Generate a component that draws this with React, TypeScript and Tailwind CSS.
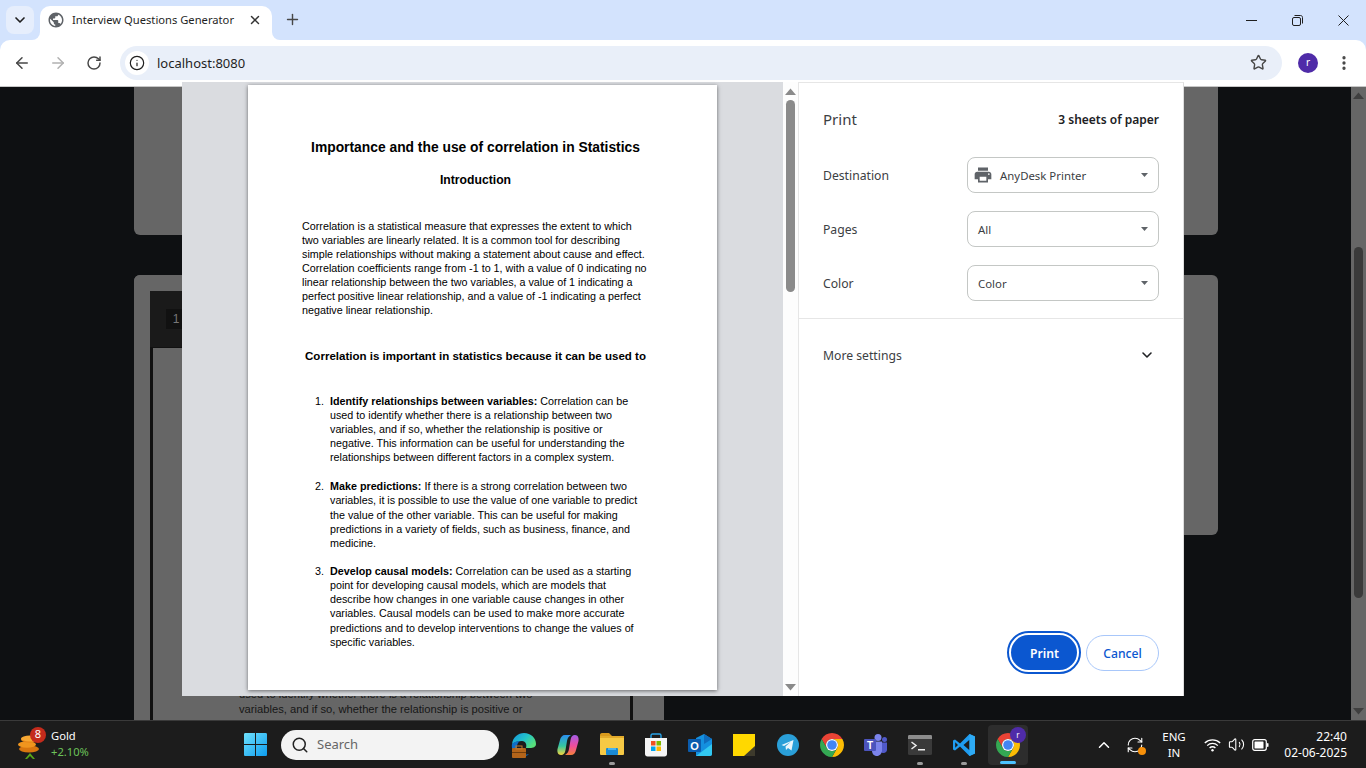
import { ArrowLeft, ArrowRight, ChevronDown, ChevronUp, EllipsisVertical, Info, Plus, RefreshCw, RotateCw, Search, Star, Volume2, X } from 'lucide-react';

const ui = { fontFamily: '"Noto Sans", "Open Sans", sans-serif' };

function Caret() {
  return (
    <svg width="7" height="4" viewBox="0 0 7 4" className="shrink-0">
      <path d="M0 0h7L3.500 4z" fill="#5f6368" />
    </svg>
  );
}

function Globe() {
  return (
    <svg width="18" height="18" viewBox="0 0 24 24" fill="#5f6368">
      <path d="M12 2C6.48 2 2 6.48 2 12s4.48 10 10 10 10-4.48 10-10S17.52 2 12 2zm-1 17.93c-3.95-.49-7-3.85-7-7.93 0-.62.08-1.21.21-1.79L9 15v1c0 1.1.9 2 2 2v1.93zm6.9-2.54c-.26-.81-1-1.39-1.9-1.39h-1v-3c0-.55-.45-1-1-1H8v-2h2c.55 0 1-.45 1-1V7h2c1.1 0 2-.9 2-2v-.41c2.93 1.19 5 4.06 5 7.41 0 2.08-.8 3.97-2.1 5.39z" />
    </svg>
  );
}

function ChromeLogo({ size = 24 }: { size?: number }) {
  return (
    <svg width={size} height={size} viewBox="2 2 20 20">
      <path d="M3.34 7A10 10 0 0 1 20.66 7H12A5 5 0 0 0 7.67 14.5Z" fill="#ea4335" />
      <path d="M20.66 7A10 10 0 0 1 12 22L16.33 14.5A5 5 0 0 0 12 7Z" fill="#fbbc04" />
      <path d="M12 22A10 10 0 0 1 3.34 7L7.67 14.5A5 5 0 0 0 16.33 14.5Z" fill="#34a853" />
      <circle cx="12" cy="12" r="5" fill="#fff" />
      <circle cx="12" cy="12" r="4" fill="#4285f4" />
    </svg>
  );
}

function EdgeLogo() {
  return (
    <svg width="26" height="26" viewBox="0 0 26 26">
      <defs>
        <linearGradient id="edgeTop" x1="0" y1="0" x2="1" y2="0.600">
          <stop offset="0" stopColor="#1593e0" />
          <stop offset="0.550" stopColor="#22c3c9" />
          <stop offset="1" stopColor="#58e07a" />
        </linearGradient>
      </defs>
      <path d="M1 12C2 5 7 1 13 1c7 0 12 5 12 11 0 3-3 4-6 4h-4c1-3 0-7-4-7-4 0-7 1-10 3z" fill="url(#edgeTop)" />
      <path d="M1 12c2-2 5-3 8-3-3 2-4 6-2 10 2 3 7 5 11 3-3 3-7 3-10 2-5-2-8-7-7-12z" fill="#0f6fc9" />
      <rect x="1" y="16" width="14" height="10" rx="1" fill="#b3641a" />
      <rect x="5" y="14" width="6" height="3" fill="none" stroke="#c47a2c" strokeWidth="1" />
      <rect x="1" y="20" width="14" height="1" fill="#6f3d0d" />
    </svg>
  );
}

function CopilotLogo() {
  return (
    <svg width="24" height="24" viewBox="0 0 24 24">
      <defs>
        <linearGradient id="copA" x1="0" y1="0" x2="0" y2="1">
          <stop offset="0" stopColor="#2b8ff0" />
          <stop offset="0.55" stopColor="#35c6a0" />
          <stop offset="1" stopColor="#f5d63d" />
        </linearGradient>
        <linearGradient id="copB" x1="0" y1="0" x2="0" y2="1">
          <stop offset="0" stopColor="#a45ce8" />
          <stop offset="0.55" stopColor="#ee4d9b" />
          <stop offset="1" stopColor="#f5813c" />
        </linearGradient>
      </defs>
      <path d="M9 2h6c-2.500 1.500-3.500 3-4 6l-1.500 9C9 20.500 7.500 22 5 22c-3 0-4-3-3.500-6L4 7c.5-3 2.500-5 5-5z" fill="url(#copA)" />
      <path d="M15 22H9c2.500-1.500 3.500-3 4-6l1.500-9C15 3.500 16.500 2 19 2c3 0 4 3 3.500 6L20 17c-.5 3-2.500 5-5 5z" fill="url(#copB)" />
    </svg>
  );
}

function FolderLogo() {
  return (
    <svg width="26" height="24" viewBox="0 0 26 24">
      <path d="M1 2c0-1 .5-2 2-2h7l3 3h-12z" fill="#d99a1c" />
      <rect x="1" y="3" width="24" height="19" rx="1" fill="#f6c945" />
      <rect x="1" y="3" width="24" height="2" fill="#e3ab2b" />
      <rect x="7" y="15" width="12" height="7" rx="1" fill="#1a8ad4" />
      <rect x="9" y="15" width="8" height="2" fill="#49b3ec" />
    </svg>
  );
}

function StoreLogo() {
  return (
    <svg width="24" height="24" viewBox="0 0 24 24">
      <path d="M7 5V2.500C7 1.500 7.500 1 8.500 1h7c1 0 1.500.5 1.500 1.500V5" fill="none" stroke="#27a3e8" strokeWidth="1.400" />
      <path d="M1 5h22v16c0 1.500-1 2.500-2.500 2.500h-17C2 23.500 1 22.500 1 21z" fill="#f5f5f5" />
      <rect x="7" y="8" width="4.500" height="4.500" fill="#f25022" />
      <rect x="12.500" y="8" width="4.500" height="4.500" fill="#7fba00" />
      <rect x="7" y="13.500" width="4.500" height="4.500" fill="#00a4ef" />
      <rect x="12.500" y="13.500" width="4.500" height="4.500" fill="#ffb900" />
    </svg>
  );
}

function OutlookLogo() {
  return (
    <svg width="24" height="24" viewBox="0 0 24 24">
      <path d="M8 5l8-4 8 5v15c0 1-1 2-2 2H8z" fill="#1490df" />
      <path d="M16 1l8 5-8 5z" fill="#0f6cbd" />
      <path d="M8 23l16-12v10c0 1-1 2-2 2z" fill="#32c8f0" />
      <rect x="0" y="6" width="13" height="13" rx="1" fill="#0b5cad" />
      <text x="6.500" y="16.500" textAnchor="middle" fontSize="11" fontWeight="700" fill="#fff" fontFamily="Liberation Sans, sans-serif">O</text>
    </svg>
  );
}

function StickyLogo() {
  return (
    <svg width="22" height="22" viewBox="0 0 22 22">
      <path d="M0 0h22v13l-9 9H0z" fill="#ffd800" />
      <path d="M22 12v10H11z" fill="#3d3a2c" />
    </svg>
  );
}

function TelegramLogo() {
  return (
    <svg width="22" height="22" viewBox="0 0 22 22">
      <circle cx="11" cy="11" r="11" fill="#2a9fd8" />
      <path d="M4.500 11l12-5-2 10.500-3.500-2.500-2 2-.5-3.500 5-4.500-6.500 4z" fill="#eaf6fc" />
    </svg>
  );
}

function TeamsLogo() {
  return (
    <svg width="24" height="24" viewBox="0 0 24 24">
      <circle cx="14" cy="4.500" r="3.500" fill="#7b83eb" />
      <circle cx="20.500" cy="6.500" r="2.500" fill="#5059c9" />
      <path d="M17 9.500h6v7c0 2-1.500 3.500-3.500 3.500-1 0-2-.5-2.500-1z" fill="#5059c9" />
      <path d="M8 8.500h10v9c0 3-2.500 5.500-5 5.500s-5-2-5-5z" fill="#7b83eb" />
      <rect x="0" y="6" width="12" height="12" rx="1" fill="#4b53bc" />
      <text x="6" y="15.500" textAnchor="middle" fontSize="10" fontWeight="700" fill="#fff" fontFamily="Liberation Sans, sans-serif">T</text>
    </svg>
  );
}

function TerminalLogo() {
  return (
    <svg width="24" height="20" viewBox="0 0 24 20">
      <rect width="24" height="20" rx="1.500" fill="#3a3a3a" />
      <path d="M0 1.500C0 .5.5 0 1.500 0h21c1 0 1.500.5 1.500 1.500V4H0z" fill="#8c8c8c" />
      <path d="M3.500 7l4.500 3.500L3.500 14" fill="none" stroke="#eee" strokeWidth="1.500" />
      <rect x="10" y="14" width="7" height="1.500" fill="#eee" />
    </svg>
  );
}

function VsCodeLogo() {
  return (
    <svg width="24" height="24" viewBox="0 0 24 24">
      <path fillRule="evenodd" d="M17.500 1 23 3.500v17L17.500 23 8 13.500 3 17.500 1 16.500v-9l2-1 5 4zM17.500 6.800 11.500 12l6 5.200zM3.200 9.300v5.400L6 12z" fill="#1f9cf0" />
      <path d="M17.500 1 23 3.500v17L17.500 23z" fill="#2eabf5" />
    </svg>
  );
}

function WindowsLogo() {
  return (
    <svg width="23" height="23" viewBox="0 0 23 23">
      <defs>
        <linearGradient id="winG" x1="0" y1="0" x2="1" y2="1">
          <stop offset="0" stopColor="#6fe0fb" />
          <stop offset="1" stopColor="#0d9df0" />
        </linearGradient>
      </defs>
      <path d="M0 1.500C0 .5.500 0 1.500 0H11v11H0zM12 0h9.500c1 0 1.500.5 1.500 1.500V11H12zM0 12h11v11H1.500C.5 23 0 22.500 0 21.500zM12 12h11v9.500c0 1-.5 1.500-1.500 1.500H12z" fill="url(#winG)" />
    </svg>
  );
}

function CoinsLogo() {
  return (
    <svg width="24" height="22" viewBox="0 0 24 22">
      <ellipse cx="12" cy="17" rx="10" ry="3.500" fill="#d9760f" />
      <ellipse cx="10" cy="12.500" rx="9" ry="3.200" fill="#f0951e" />
      <ellipse cx="13" cy="7.500" rx="9" ry="3.200" fill="#e9881a" />
      <ellipse cx="13" cy="6.500" rx="9" ry="3" fill="#f7a833" />
    </svg>
  );
}

function TaskIcon({ children, dot, active }: { children: React.ReactNode; dot?: boolean; active?: boolean }) {
  return (
    <div className={`relative flex h-10 w-10 items-center justify-center rounded-[4px] ${active ? 'bg-[#2d2d2d]' : 'mr-1'}`}>
      {children}
      {dot && <span className="absolute bottom-0 left-[17px] h-[3px] w-[6px] rounded-full bg-[#9b9b9b]" />}
      {active && <span className="absolute bottom-[1px] left-[12px] h-[3px] w-4 rounded-full bg-[#4cc2ff]" />}
    </div>
  );
}

function Row({ label, value, icon }: { label: string; value: string; icon?: boolean }) {
  return (
    <div className="flex h-9 items-center justify-between">
      <span className="pt-[2px] text-[12.200px] text-[#3c4043]">{label}</span>
      <div className={`flex h-9 w-[192px] items-center rounded-lg border border-[#c4c7c5] pr-[10px] ${icon ? 'pl-[5px]' : 'pl-[10px]'}`}>
        {icon && (
          <svg width="20" height="20" viewBox="0 0 24 24" fill="#5f6368" className="mr-[7px]">
            <path d="M19 8H5c-1.660 0-3 1.340-3 3v6h4v4h12v-4h4v-6c0-1.660-1.340-3-3-3zm-3 11H8v-5h8v5zm3-7c-.55 0-1-.45-1-1s.45-1 1-1 1 .45 1 1-.45 1-1 1zm-1-9H6v4h12V3z" />
          </svg>
        )}
        <span className="flex-1 pt-[2px] text-[11.400px] text-[#3c4043]">{value}</span>
        <Caret />
      </div>
    </div>
  );
}

function ListItem({ n, title, lines, className }: { n: number; title: string; lines: string[]; className?: string }) {
  return (
    <div className={`flex ${className ?? ''}`}>
      <span className="w-[28px] shrink-0 pr-[6px] text-right">{n}.</span>
      <p className="whitespace-nowrap">
        <b>{title}</b> {lines[0]}
        {lines.slice(1).map((l) => (
          <span key={l}>
            <br />
            {l}
          </span>
        ))}
      </p>
    </div>
  );
}

function ScrollArrow({ up, color }: { up?: boolean; color: string }) {
  return (
    <svg width="11" height="7" viewBox="0 0 11 7">
      <path d={up ? 'M5.500 0.500 11 7H0z' : 'M0 0h11L5.500 6.500z'} fill={color} />
    </svg>
  );
}

export default function App() {
  return (
    <div className="relative flex h-[768px] w-[1366px] flex-col overflow-hidden bg-[#d3e3fd]" style={ui}>
      {/* tab strip */}
      <div className="flex h-10 shrink-0 items-end pl-[6px]">
        <div className="mb-[6px] flex h-7 w-7 items-center justify-center rounded-lg bg-[#e6eefc]">
          <ChevronDown size={16} strokeWidth={2.5} className="text-[#1f1f1f]" />
        </div>
        <div className="relative ml-[6px] flex h-[34px] w-[232px] items-center rounded-t-[10px] bg-white pb-[6px] pl-[7px] pr-[10px]">
          <span className="absolute bottom-0 left-[-8px] h-2 w-2 bg-white">
            <span className="block h-full w-full rounded-br-lg bg-[#d3e3fd]" />
          </span>
          <span className="absolute bottom-0 right-[-8px] h-2 w-2 bg-white">
            <span className="block h-full w-full rounded-bl-lg bg-[#d3e3fd]" />
          </span>
          <span className="mr-[7px]">
            <Globe />
          </span>
          <span className="flex-1 whitespace-nowrap text-[11.200px] text-[#1f1f1f]">Interview Questions Generator</span>
          <X size={14} strokeWidth={2.5} className="text-[#333]" />
        </div>
        <div className="mb-[7px] ml-[6px] flex h-7 w-7 items-center justify-center">
          <Plus size={17} strokeWidth={2} className="text-[#474747]" />
        </div>
        <div className="mb-[6px] ml-auto flex h-7 items-center">
          <div className="flex w-[46px] justify-center">
            <svg width="11" height="11" viewBox="0 0 11 11">
              <path d="M0 5.500h11" stroke="#1f1f1f" />
            </svg>
          </div>
          <div className="flex w-[46px] justify-center">
            <svg width="11" height="11" viewBox="0 0 11 11" fill="none" stroke="#1f1f1f">
              <rect x="0.500" y="2.500" width="8" height="8" rx="1.500" />
              <path d="M2.500 .5h6c1.200 0 2 .8 2 2v6" />
            </svg>
          </div>
          <div className="flex w-[46px] justify-center">
            <svg width="11" height="11" viewBox="0 0 11 11">
              <path d="M.5.5l10 10M10.500.5l-10 10" stroke="#1f1f1f" />
            </svg>
          </div>
        </div>
      </div>

      {/* toolbar */}
      <div className="flex h-[47px] shrink-0 items-center rounded-t-[10px] border-b border-[#c7c7c7] bg-white pb-[1px] pl-[13px] pr-[13px]">
        <ArrowLeft size={18} strokeWidth={2} className="text-[#474747]" />
        <ArrowRight size={18} strokeWidth={2} className="ml-[18px] text-[#b1b1b1]" />
        <RotateCw size={16} strokeWidth={2.2} className="ml-[19px] text-[#474747]" />
        <div className="ml-[18px] flex h-[34px] w-[1162px] items-center rounded-full bg-[#e9eff9] pl-[5px] pr-[15px]">
          <div className="flex h-6 w-6 items-center justify-center rounded-full bg-white">
            <Info size={16} strokeWidth={1.8} className="text-[#1f1f1f]" />
          </div>
          <span className="ml-[8px] flex-1 pt-[2px] text-[13px] text-[#1f1f1f]">localhost:8080</span>
          <Star size={17} strokeWidth={2} className="text-[#474747]" />
        </div>
        <div className="ml-[16px] flex h-5 w-5 items-center justify-center rounded-full bg-[#4f2ba8] text-[10px] text-white">r</div>
        <EllipsisVertical size={18} strokeWidth={2.4} className="ml-[17px] text-[#474747]" />
      </div>

      {/* dimmed page */}
      <div className="flex h-[633px] shrink-0 bg-[#0e1012]">
        <div className="flex-1 pl-[134px]" style={{ fontFamily: '"Liberation Sans", sans-serif' }}>
          <div className="h-[148px] w-[1084px] rounded-b-md bg-[#666]" />
          <div className="mt-10 h-[260px] w-[1084px] rounded-md bg-[#666]">
            <div className="h-[445px] w-[530px] rounded-tl-md bg-[#666] pl-4 pt-4">
              <div className="h-[429px] w-[483px] border-x-[3px] border-x-[#111] bg-[#666]">
                <div className="-mx-[3px] h-[57px] border-b border-b-[#111] bg-[#1a1a1a] pl-4 pt-[18px]">
                  <span className="flex h-5 w-5 items-center justify-center bg-[#111] text-[12px] text-[#777]">1</span>
                </div>
                <p className="whitespace-nowrap pl-[86px] pt-[339px] text-[11.200px] leading-[15px] text-[#161616]">
                  used to identify whether there is a relationship between two
                  <br />
                  variables, and if so, whether the relationship is positive or
                </p>
              </div>
            </div>
          </div>
        </div>
        <div className="flex w-[15px] flex-col items-center bg-[#666] pt-[5px]">
          <ScrollArrow up color="#3f3f3f" />
          <div className="mt-[148px] h-[351px] w-[9px] rounded-full bg-[#3a3a3a]" />
          <div className="mt-auto pb-[5px]">
            <ScrollArrow color="#3f3f3f" />
          </div>
        </div>
      </div>

      {/* taskbar */}
      <div className="flex h-12 shrink-0 items-center border-t border-[#3a3a3a] bg-[#1c1c1c] text-white">
        <div className="flex w-[244px] shrink-0 items-center pl-[17px]">
          <div className="relative h-[34px] w-[34px]">
            <div className="pt-[4px]">
              <CoinsLogo />
            </div>
            <span className="absolute left-[13px] top-[-1px] flex h-4 w-4 items-center justify-center rounded-full bg-[#c42b1c] text-[11px] text-white">8</span>
            <svg width="10" height="6" viewBox="0 0 10 6" className="absolute bottom-[3px] left-[8px]">
              <path d="M0 6l5-6 5 6-2 0-3-3-3 3z" fill="#58a618" />
            </svg>
          </div>
          <div className="pb-[2px] text-[11.200px] leading-[16px]">
            <div>Gold</div>
            <div className="text-[#6cc35a]">+2.10%</div>
          </div>
        </div>
        <WindowsLogo />
        <div className="ml-[14px] flex h-[30px] w-[218px] items-center rounded-full bg-[#f3f3f3] pl-[10px]">
          <Search size={18} strokeWidth={2} className="text-[#222]" />
          <span className="ml-[8px] text-[13px] text-[#666]">Search</span>
        </div>
        <div className="ml-[5px] flex items-center">
          <TaskIcon><EdgeLogo /></TaskIcon>
          <TaskIcon><CopilotLogo /></TaskIcon>
          <TaskIcon dot><FolderLogo /></TaskIcon>
          <TaskIcon><StoreLogo /></TaskIcon>
          <TaskIcon><OutlookLogo /></TaskIcon>
          <TaskIcon><StickyLogo /></TaskIcon>
          <TaskIcon><TelegramLogo /></TaskIcon>
          <TaskIcon><ChromeLogo /></TaskIcon>
          <TaskIcon><TeamsLogo /></TaskIcon>
          <TaskIcon dot><TerminalLogo /></TaskIcon>
          <TaskIcon dot><VsCodeLogo /></TaskIcon>
          <TaskIcon active>
            <ChromeLogo />
            <span className="absolute right-[2px] top-[2px] flex h-4 w-4 items-center justify-center rounded-full bg-[#4f2ba8] text-[8px]">r</span>
          </TaskIcon>
        </div>
        <div className="ml-[67px] flex items-center">
          <ChevronUp size={18} strokeWidth={2} className="text-white" />
          <div className="relative ml-[13px]">
            <RefreshCw size={18} strokeWidth={1.5} className="text-white" />
            <span className="absolute bottom-[-1px] right-[-2px] h-2 w-2 rounded-full bg-[#f7900a]" />
          </div>
          <div className="ml-[10px] w-[40px] text-center text-[11.500px] leading-[16px]">
            ENG
            <br />
            IN
          </div>
          <svg width="17" height="14" viewBox="0 0 17 14" fill="none" stroke="#fff" strokeWidth="1.300" className="ml-[10px]">
            <path d="M.8 5a11 11 0 0 1 15.400 0M3.200 7.600a7.500 7.500 0 0 1 10.600 0M5.600 10a4 4 0 0 1 5.800 0" />
            <circle cx="8.500" cy="12.300" r="1.200" fill="#fff" stroke="none" />
          </svg>
          <Volume2 size={17} strokeWidth={1.5} className="ml-[7px] text-white" />
          <svg width="17" height="12" viewBox="0 0 17 12" fill="none" className="ml-[7px]">
            <rect x="0.700" y="0.700" width="13.600" height="10.600" rx="2" stroke="#fff" strokeWidth="1.200" />
            <rect x="2.500" y="2.500" width="9" height="7" rx="0.500" fill="#fff" />
            <rect x="15" y="4" width="1.500" height="4" rx="0.700" fill="#fff" />
          </svg>
          <div className="ml-[14px] w-[64px] text-right text-[12px] leading-[16px]">
            22:40
            <br />
            <span className="whitespace-nowrap">02-06-2025</span>
          </div>
        </div>
      </div>

      {/* print dialog over the page */}
      <div className="absolute left-[182px] top-[82px] flex h-[614px] w-[1002px] bg-white">
        <div className="w-[601px] bg-[#dadce0] pl-[66px] pt-[3px]">
          <div
            className="h-[605px] w-[469px] bg-white pt-[54px] text-[10.750px] leading-[14.100px] text-black shadow-[0_1px_4px_rgba(0,0,0,0.55)]"
            style={{ fontFamily: '"Liberation Sans", sans-serif' }}
          >
            <h1 className="mr-[14px] text-center text-[13.830px] font-bold leading-4">Importance and the use of correlation in Statistics</h1>
            <h2 className="mr-[14px] mt-[17px] text-center text-[12.200px] font-bold leading-4">Introduction</h2>
            <p className="ml-[54px] mt-[31px] whitespace-nowrap leading-[14px]">
              Correlation is a statistical measure that expresses the extent to which
              <br />
              two variables are linearly related. It is a common tool for describing
              <br />
              simple relationships without making a statement about cause and effect.
              <br />
              Correlation coefficients range from -1 to 1, with a value of 0 indicating no
              <br />
              linear relationship between the two variables, a value of 1 indicating a
              <br />
              perfect positive linear relationship, and a value of -1 indicating a perfect
              <br />
              negative linear relationship.
            </p>
            <h3 className="mr-[14px] mt-[30.800px] whitespace-nowrap text-center text-[11.540px] font-bold leading-4">Correlation is important in statistics because it can be used to</h3>
            <div className="ml-[54px] mt-[29.900px]">
              <ListItem
                n={1}
                title="Identify relationships between variables:"
                lines={[
                  'Correlation can be',
                  'used to identify whether there is a relationship between two',
                  'variables, and if so, whether the relationship is positive or',
                  'negative. This information can be useful for understanding the',
                  'relationships between different factors in a complex system.',
                ]}
              />
              <ListItem
                n={2}
                className="mt-[15px] leading-[14.200px]"
                title="Make predictions:"
                lines={[
                  'If there is a strong correlation between two',
                  'variables, it is possible to use the value of one variable to predict',
                  'the value of the other variable. This can be useful for making',
                  'predictions in a variety of fields, such as business, finance, and',
                  'medicine.',
                ]}
              />
              <ListItem
                n={3}
                className="mt-[13.500px] leading-[14.250px]"
                title="Develop causal models:"
                lines={[
                  'Correlation can be used as a starting',
                  'point for developing causal models, which are models that',
                  'describe how changes in one variable cause changes in other',
                  'variables. Causal models can be used to make more accurate',
                  'predictions and to develop interventions to change the values of',
                  'specific variables.',
                ]}
              />
            </div>
          </div>
        </div>
        <div className="flex w-[15px] flex-col items-center bg-[#fdfdfd] pt-[6px]">
          <ScrollArrow up color="#8a8a8a" />
          <div className="mt-[5px] h-[192px] w-[9px] rounded-full bg-[#8b8b8b]" />
          <div className="mt-auto pb-[5px]">
            <ScrollArrow color="#8a8a8a" />
          </div>
        </div>
        <div className="flex flex-1 flex-col border-l border-l-[#e6e6e6] border-r border-r-[#dedede] border-t border-t-[#e6e6e6]">
          <div className="flex items-center justify-between pl-6 pr-6 pt-[25px]">
            <span className="text-[15px] leading-5 text-[#3c4043]">Print</span>
            <span className="pt-[2px] text-[12px] font-semibold leading-5 text-[#202124]">3 sheets of paper</span>
          </div>
          <div className="flex flex-col gap-[18px] pl-6 pr-6 pt-[27px]">
            <Row label="Destination" value="AnyDesk Printer" icon />
            <Row label="Pages" value="All" />
            <Row label="Color" value="Color" />
          </div>
          <div className="mt-[17px] border-t border-[#e6e6e6]" />
          <div className="flex items-center justify-between pl-6 pr-[28px] pt-[25px]">
            <span className="pt-[2px] text-[12.200px] leading-5 text-[#3c4043]">More settings</span>
            <ChevronDown size={16} strokeWidth={2.4} className="text-[#202124]" />
          </div>
          <div className="mt-auto flex items-center justify-end gap-[5px] pb-[22px] pr-6">
            <button className="flex h-[43px] w-[74px] items-center justify-center rounded-full border-2 border-[#0b57d0] bg-white">
              <span className="flex h-[35px] w-[66px] items-center justify-center rounded-full bg-[#0b57d0] pl-[1px] pt-[4px] text-[12.200px] font-semibold text-white">Print</span>
            </button>
            <button className="h-9 w-[73px] rounded-full border border-[#a8c7fa] bg-white pt-[4px] text-[12.200px] font-medium text-[#0b57d0]">Cancel</button>
          </div>
        </div>
      </div>
    </div>
  );
}
